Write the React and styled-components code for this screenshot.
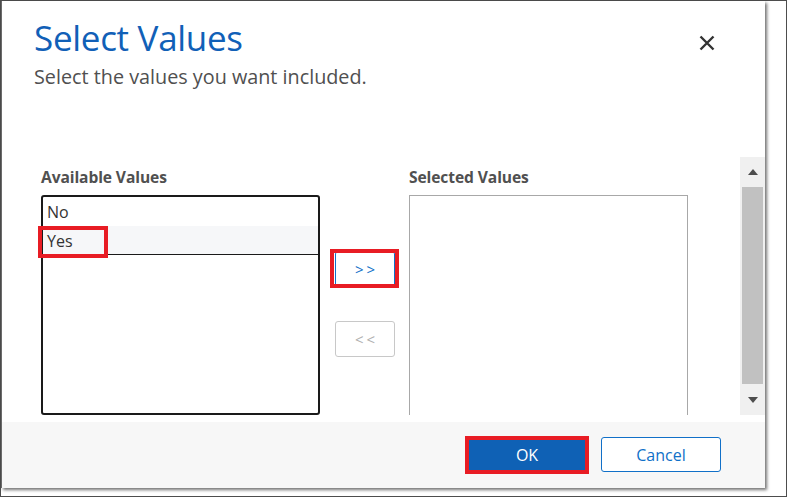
import React, { useState } from "react";
import styled, { createGlobalStyle } from "styled-components";

const GlobalStyle = createGlobalStyle`
  html, body {
    margin: 0;
    padding: 0;
    background: #ffffff;
  }
  * {
    box-sizing: border-box;
  }
`;

const Frame = styled.div`
  width: 787px;
  height: 497px;
  border: 1px solid #4d4d4d;
  background: #ffffff;
  font-family: "Open Sans", "Noto Sans", sans-serif;
`;

const Dialog = styled.div`
  width: 764px;
  height: 487px;
  display: flex;
  flex-direction: column;
  background: #ffffff;
  border-left: 1px solid #6b6b6b;
  box-shadow: 2px 2px 3px rgba(0, 0, 0, 0.55);
`;

const Header = styled.div`
  height: 156px;
  display: flex;
  justify-content: space-between;
  align-items: flex-start;
  padding: 14px 50px 0 32px;
`;

const Titles = styled.div`
  display: flex;
  flex-direction: column;
`;

const Title = styled.h1`
  margin: 0;
  font-size: 35px;
  font-weight: 400;
  line-height: 46px;
  color: #1160b7;
  letter-spacing: -0.3px;
`;

const Subtitle = styled.p`
  margin: 2px 0 0;
  font-size: 19.8px;
  line-height: 28px;
  color: #505050;
`;

const CloseButton = styled.button`
  margin-top: 20px;
  width: 16px;
  height: 16px;
  padding: 0;
  border: none;
  background: transparent;
  display: flex;
  cursor: pointer;
`;

const ScrollArea = styled.div`
  height: 258px;
  display: flex;
  overflow: hidden;
`;

const ScrollContent = styled.div`
  flex: 1;
  display: flex;
  align-items: flex-start;
  gap: 14px;
  padding: 10px 0 0 39px;
`;

const Column = styled.div`
  width: 279px;
  display: flex;
  flex-direction: column;
`;

const Label = styled.div`
  font-size: 15.6px;
  font-weight: 700;
  line-height: 20px;
  height: 28px;
  color: #505050;
  letter-spacing: -0.1px;
`;

const ListBox = styled.div`
  flex-shrink: 0;
  height: ${(p) => (p.$clipped ? "232px" : "220px")};
  border: ${(p) => (p.$focused ? "2px solid #1a1a1a" : "1px solid #a8a8a8")};
  border-radius: ${(p) => (p.$focused ? "3px" : "0")};
  padding: ${(p) => (p.$focused ? "0" : "1px")};
  display: flex;
  flex-direction: column;
`;

const Item = styled.div`
  position: relative;
  height: 29px;
  padding: 3px 4px 0;
  font-size: 16px;
  line-height: 24px;
  color: #333333;
  background: ${(p) => (p.$active ? "#f6f7f9" : "transparent")};
  border-bottom: 1px solid ${(p) => (p.$active ? "#1a1a1a" : "transparent")};
`;

const Mark = styled.span`
  position: absolute;
  pointer-events: none;
  border: 4px solid #e81c24;
  top: ${(p) => p.$top};
  right: ${(p) => p.$right};
  bottom: ${(p) => p.$bottom};
  left: ${(p) => p.$left};
`;

const Mover = styled.div`
  width: 60px;
  display: flex;
  flex-direction: column;
  gap: 34px;
  padding-top: 84px;
  margin-left: 1px;
`;

const ArrowButton = styled.button`
  position: relative;
  width: 60px;
  height: 36px;
  padding: 0 0 0 3px;
  border: 1px solid ${(p) => (p.$on ? "#1070c8" : "#c8c8c8")};
  border-radius: 3px;
  background: #ffffff;
  font-family: "Open Sans", sans-serif;
  font-size: 15px;
  letter-spacing: 3px;
  color: ${(p) => (p.$on ? "#1070c8" : "#b0b0b0")};
`;

const Scrollbar = styled.div`
  width: 25px;
  background: #f0f0f0;
  display: flex;
  flex-direction: column;
  align-items: center;
`;

const ScrollArrow = styled.div`
  height: ${(p) => (p.$up ? "30px" : "31px")};
  display: flex;
  align-items: center;
  justify-content: center;
`;

const Thumb = styled.div`
  width: 21px;
  flex: 1;
  background: #c1c1c1;
`;

const Spacer = styled.div`
  height: 7px;
`;

const Footer = styled.div`
  height: 66px;
  background: #f7f7f7;
  display: flex;
  justify-content: flex-end;
  align-items: center;
  gap: 14px;
  padding: 0 44px 1px 0;
`;

const FooterButton = styled.button`
  position: relative;
  width: 120px;
  height: 35px;
  border-radius: 3px;
  font-family: "Open Sans", sans-serif;
  font-size: 16px;
  border: 1px solid ${(p) => (p.$primary ? "#0f61b5" : "#1170c8")};
  background: ${(p) => (p.$primary ? "#0f61b5" : "#ffffff")};
  color: ${(p) => (p.$primary ? "#ffffff" : "#1070c8")};
`;

const Triangle = ({ up }) => (
  <svg width="10" height="6" viewBox="0 0 10 6">
    <path d={up ? "M0 6 L5 0 L10 6 Z" : "M0 0 L5 6 L10 0 Z"} fill="#4d4d4d" />
  </svg>
);

const App = () => {
  const [available] = useState(["No", "Yes"]);
  const active = "Yes";

  return (
    <>
      <GlobalStyle />
      <Frame>
        <Dialog>
          <Header>
            <Titles>
              <Title>Select Values</Title>
              <Subtitle>Select the values you want included.</Subtitle>
            </Titles>
            <CloseButton aria-label="Close">
              <svg width="16" height="16" viewBox="0 0 16 16">
                <path
                  d="M1.5 1.5 L14.5 14.5 M14.5 1.5 L1.5 14.5"
                  stroke="#333333"
                  strokeWidth="2.4"
                />
              </svg>
            </CloseButton>
          </Header>

          <ScrollArea>
            <ScrollContent>
              <Column>
                <Label>Available Values</Label>
                <ListBox $focused>
                  {available.map((value) => (
                    <Item key={value} $active={value === active}>
                      {value}
                      {value === active && (
                        <Mark $top="0" $left="-5px" $right="auto" $bottom="auto" style={{ width: 70, height: 32 }} />
                      )}
                    </Item>
                  ))}
                </ListBox>
              </Column>

              <Mover>
                <ArrowButton $on>
                  &gt;&gt;
                  <Mark $top="-3px" $right="-5px" $bottom="-2px" $left="-6px" />
                </ArrowButton>
                <ArrowButton>&lt;&lt;</ArrowButton>
              </Mover>

              <Column>
                <Label>Selected Values</Label>
                <ListBox $clipped />
              </Column>
            </ScrollContent>

            <Scrollbar>
              <ScrollArrow $up>
                <Triangle up />
              </ScrollArrow>
              <Thumb />
              <ScrollArrow>
                <Triangle />
              </ScrollArrow>
            </Scrollbar>
          </ScrollArea>

          <Spacer />

          <Footer>
            <FooterButton $primary>
              OK
              <Mark $top="-2px" $right="-3px" $bottom="-3px" $left="-3px" />
            </FooterButton>
            <FooterButton>Cancel</FooterButton>
          </Footer>
        </Dialog>
      </Frame>
    </>
  );
};

export default App;
